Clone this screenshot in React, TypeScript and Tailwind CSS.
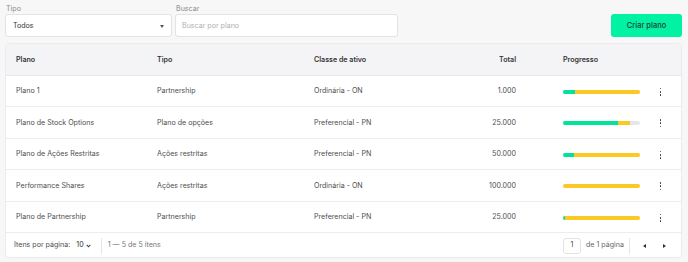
import React from "react";

type Row = {
  plano: string;
  tipo: string;
  classe: string;
  total: string;
  green: number;
  yellow: number;
};

const rows: Row[] = [
  { plano: "Plano 1", tipo: "Partnership", classe: "Ordinária - ON", total: "1.000", green: 15, yellow: 85 },
  { plano: "Plano de Stock Options", tipo: "Plano de opções", classe: "Preferencial - PN", total: "25.000", green: 72, yellow: 15 },
  { plano: "Plano de Ações Restritas", tipo: "Ações restritas", classe: "Preferencial - PN", total: "50.000", green: 14, yellow: 86 },
  { plano: "Performance Shares", tipo: "Ações restritas", classe: "Ordinária - ON", total: "100.000", green: 0, yellow: 100 },
  { plano: "Plano de Partnership", tipo: "Partnership", classe: "Preferencial - PN", total: "25.000", green: 3, yellow: 97 },
];

const cols = "grid grid-cols-[141px_157px_132px_70px_124px_1fr] items-center pl-[10px]";

function Dots() {
  return (
    <div className="flex flex-col items-center gap-[1.5px]">
      <span className="block w-[1.8px] h-[1.8px] rounded-full bg-[#3a3a3a]" />
      <span className="block w-[1.8px] h-[1.8px] rounded-full bg-[#3a3a3a]" />
      <span className="block w-[1.8px] h-[1.8px] rounded-full bg-[#3a3a3a]" />
    </div>
  );
}

export default function App() {
  return (
    <div
      className="w-[688px] h-[262px] bg-[#f7f7f8] pl-[5px] pr-[6px] pt-[3px] text-[7.1px] text-[#4d4d4d]"
      style={{ fontFamily: "Inter, 'Noto Sans', sans-serif" }}
    >
      {/* Filters */}
      <div className="flex items-end">
        <div className="flex flex-col w-[167px]">
          <span className="leading-[10px] text-[#8a8a8a] pl-[1px] pt-[1px]">Tipo</span>
          <div className="h-[23px] bg-white border border-[#e3e3e6] rounded-[3px] flex items-center justify-between pl-[7px] pr-[7px] pt-[2px]">
            <span className="text-[#333]">Todos</span>
            <span className="w-0 h-0 border-l-[2.5px] border-r-[2.5px] border-t-[3px] border-l-transparent border-r-transparent border-t-[#555]" />
          </div>
        </div>
        <div className="flex flex-col w-[223px] ml-[3px]">
          <span className="leading-[10px] text-[#8a8a8a] pl-[1px] pt-[1px]">Buscar</span>
          <div className="h-[23px] bg-white border border-[#e3e3e6] rounded-[3px] flex items-center pl-[6px] pt-[2px]">
            <span className="text-[#b0b0b0]">Buscar por plano</span>
          </div>
        </div>
        <div className="flex-1" />
        <button className="h-[23px] w-[71px] bg-[#00f2a2] rounded-[3px] text-[#1e3d33] font-medium text-[7.5px] pt-[1px]">
          Criar plano
        </button>
      </div>

      {/* Table card */}
      <div className="mt-[6px] bg-white border border-[#ebebee] rounded-[4px] overflow-hidden">
        <div className={`${cols} h-[31.5px] pt-[2px] bg-[#f4f4f6] border-b border-[#e8e8eb] font-semibold text-[#333]`}>
          <span>Plano</span>
          <span>Tipo</span>
          <span>Classe de ativo</span>
          <span className="text-right">Total</span>
          <span className="pl-[47px]">Progresso</span>
          <span />
        </div>
        {rows.map((r) => (
          <div key={r.plano} className={`${cols} h-[31.5px] pt-[2px] border-b border-[#ececef]`}>
            <span>{r.plano}</span>
            <span>{r.tipo}</span>
            <span>{r.classe}</span>
            <span className="text-right">{r.total}</span>
            <div className="pl-[47px]">
              <div className="w-[77px] h-[4px] rounded-full bg-[#e6e6e6] flex overflow-hidden">
                <div className="h-full bg-[#00e398]" style={{ width: `${r.green}%` }} />
                <div className="h-full bg-[#fdc823]" style={{ width: `${r.yellow}%` }} />
              </div>
            </div>
            <div className="flex justify-center">
              <Dots />
            </div>
          </div>
        ))}
        {/* Footer */}
        <div className="h-[24px] flex items-center pl-[8px] pr-[15px] pt-[1px]">
          <span>Itens por página:</span>
          <span className="ml-[6px] text-[#333]">10</span>
          <svg className="ml-[2px]" width="5" height="4" viewBox="0 0 5 4">
            <path d="M0.7 0.8 L2.5 2.8 L4.3 0.8" fill="none" stroke="#444" strokeWidth="1.1" />
          </svg>
          <span className="ml-[10px] w-px h-[16px] bg-[#e6e6e9]" />
          <span className="ml-[6px] text-[#777]">1 — 5 de 5 itens</span>
          <div className="flex-1" />
          <div className="w-[18px] h-[16px] border border-[#e3e3e6] rounded-[3px] flex items-center justify-center text-[#444]">
            1
          </div>
          <span className="ml-[5px] text-[#666]">de 1 página</span>
          <span className="ml-[5px] w-px h-[16px] bg-[#e6e6e9]" />
          <span className="ml-[13px] w-0 h-0 border-t-[2px] border-b-[2px] border-r-[3px] border-t-transparent border-b-transparent border-r-[#333]" />
          <span className="ml-[17px] w-0 h-0 border-t-[2px] border-b-[2px] border-l-[3px] border-t-transparent border-b-transparent border-l-[#333]" />
        </div>
      </div>
    </div>
  );
}
